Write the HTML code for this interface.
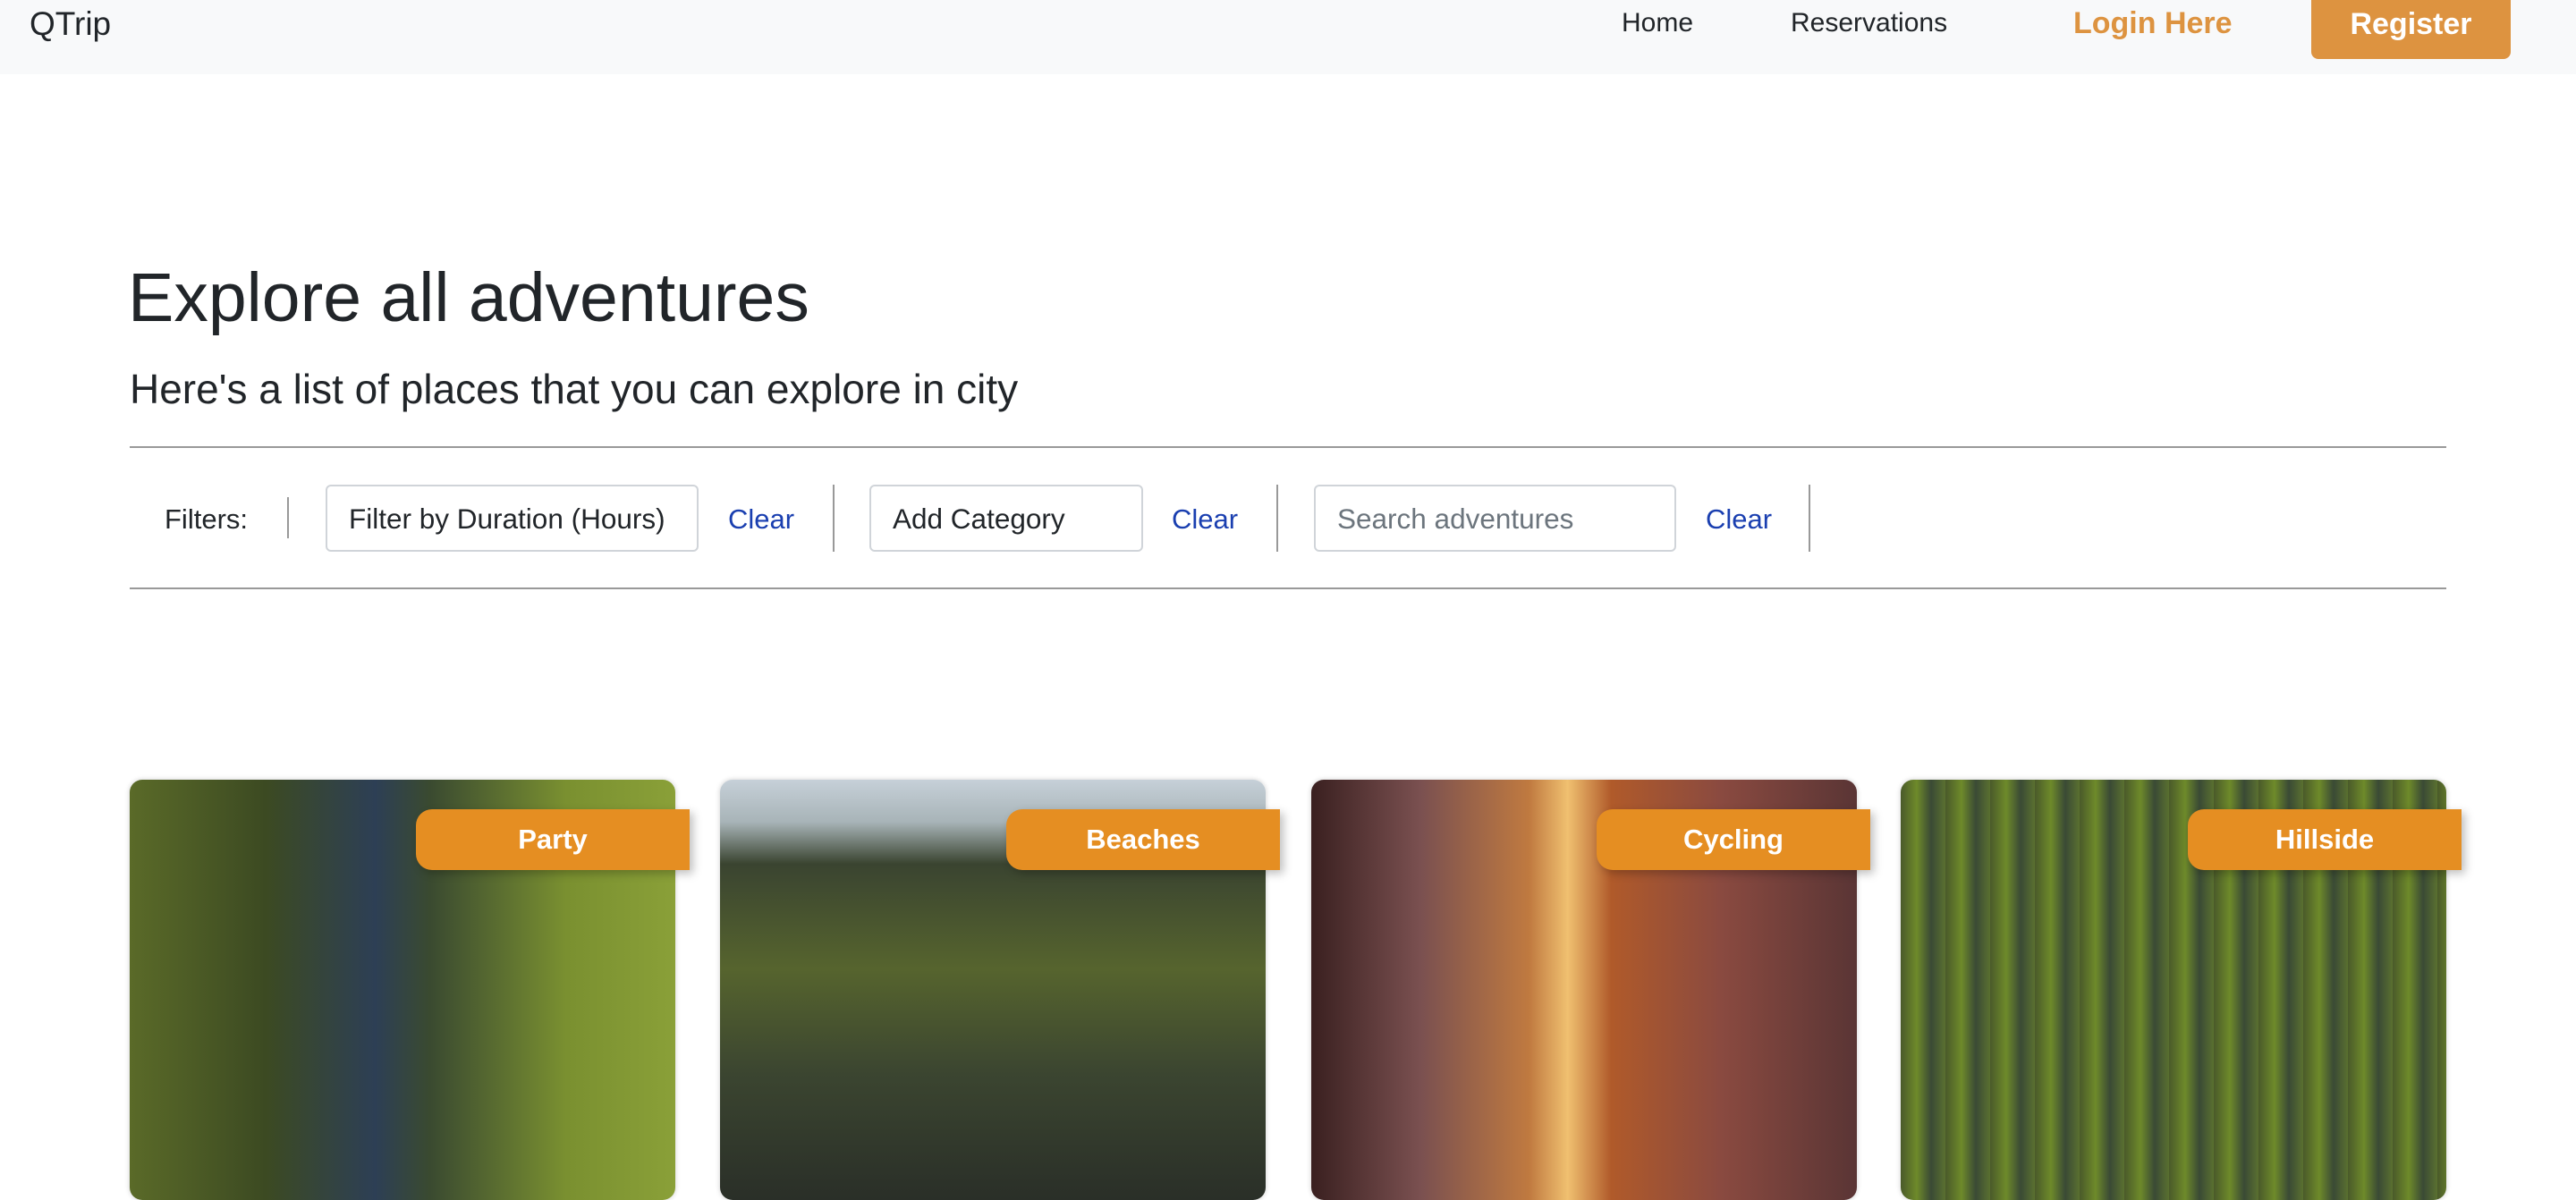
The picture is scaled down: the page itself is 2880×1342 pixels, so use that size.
<!DOCTYPE html>
<html><head><meta charset="utf-8"><style>
*{box-sizing:border-box;margin:0;padding:0}
body{width:2880px;height:1334px;overflow:hidden;background:#fff;font-family:"Liberation Sans",sans-serif;color:#212529;position:relative}
.nav{position:absolute;left:0;top:0;width:2880px;height:83px;background:#f8f9fa}
.abs{position:absolute;white-space:nowrap}
.reg{position:absolute;left:2584px;top:0;width:223px;height:66px;background:#dd9340;border-radius:0 0 8px 8px;color:#fff;font-weight:bold;font-size:34px;text-align:center;line-height:54px}
hr{position:absolute;left:145px;width:2590px;border:0;border-top:2px solid #999}
.inp{position:absolute;top:542px;height:75px;border:2px solid #d0d4d9;border-radius:6px;font-size:31.5px;line-height:73px;padding-left:24px;white-space:nowrap}
.clr{position:absolute;top:563px;font-size:31px;color:#1a3fb0}
.div{position:absolute;top:542px;width:2px;height:75px;background:#999}
.card{position:absolute;top:872px;width:610px;height:470px;border-radius:14px;overflow:hidden;box-shadow:0 0 6px rgba(0,0,0,.2)}
.badge{position:absolute;top:905px;width:306px;height:68px;background:#e58e22;border-radius:18px 0 0 18px;color:#fff;font-weight:bold;font-size:31px;text-align:center;line-height:68px;box-shadow:4px 4px 10px rgba(0,0,0,.25)}
</style></head><body>
<div class="nav"></div>
<div class="abs" style="left:33px;top:6px;font-size:37px">QTrip</div>
<div class="abs" style="left:1813px;top:9px;font-size:30px">Home</div>
<div class="abs" style="left:2002px;top:9px;font-size:30px">Reservations</div>
<div class="abs" style="left:2318px;top:7px;font-size:34px;font-weight:bold;color:#dd9340">Login Here</div>
<div class="reg">Register</div>
<div class="abs" style="left:143px;top:289px;font-size:77px">Explore all adventures</div>
<div class="abs" style="left:145px;top:408px;font-size:46px">Here's a list of places that you can explore in city</div>
<hr style="top:499px"><hr style="top:657px">
<div class="abs" style="left:184px;top:563px;font-size:31px">Filters:</div>
<div class="div" style="left:321px;top:556px;height:46px"></div>
<div class="inp" style="left:364px;width:417px">Filter by Duration (Hours)</div>
<div class="clr" style="left:814px">Clear</div>
<div class="div" style="left:931px"></div>
<div class="inp" style="left:972px;width:306px">Add Category</div>
<div class="clr" style="left:1310px">Clear</div>
<div class="div" style="left:1427px"></div>
<div class="inp" style="left:1469px;width:405px;color:#6c757d">Search adventures</div>
<div class="clr" style="left:1907px">Clear</div>
<div class="div" style="left:2022px"></div>
<div class="card" style="left:145px;background:linear-gradient(90deg,#5a6a28 0%,#3c4a22 25%,#2d3f55 45%,#3a4a30 55%,#7a9030 80%,#8aa038 100%)"></div>
<div class="card" style="left:805px;background:linear-gradient(180deg,#c6d0d8 0%,#a8b4b8 10%,#3a4430 20%,#56642e 45%,#3b4530 70%,#2a2f28 100%)"></div>
<div class="card" style="left:1466px;background:linear-gradient(90deg,#3a2020 0%,#7a5050 20%,#c07a40 40%,#f0c070 47%,#b05a2a 55%,#8a4a40 75%,#5a3535 100%)"></div>
<div class="card" style="left:2125px;background:repeating-linear-gradient(90deg,#4a5a2a 0,#6e8a2a 18px,#3a4a35 34px,#5a7030 50px)"></div>
<div class="badge" style="left:465px">Party</div>
<div class="badge" style="left:1125px">Beaches</div>
<div class="badge" style="left:1785px">Cycling</div>
<div class="badge" style="left:2446px">Hillside</div>
</body></html>
